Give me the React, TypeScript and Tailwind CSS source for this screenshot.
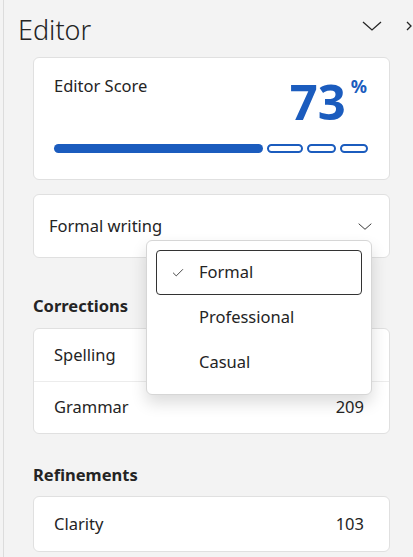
import { Check } from "lucide-react";

const corrections = [
  { label: "Spelling", count: "" },
  { label: "Grammar", count: "209" },
];

const styles = ["Formal", "Professional", "Casual"];

function Chevron({ className }: { className?: string }) {
  return (
    <svg viewBox="0 0 20 10" fill="none" className={className}>
      <polyline points="1,1 10,9 19,1" stroke="#242424" strokeWidth="1.3" />
    </svg>
  );
}

export default function App() {
  return (
    <div className="relative h-[557px] w-[413px] overflow-hidden bg-[#f3f3f3] font-['Noto_Sans',sans-serif] text-[#242424]">
      {/* left rail line */}
      <div className="absolute left-[3px] top-0 h-full w-px bg-[#dcdcdc]" />

      {/* header */}
      <div className="flex h-[57px] items-start pl-[18px] pt-[12px]">
        <h1 className="text-[27px] font-light leading-[36px]">Editor</h1>
        <div className="-mr-[3px] ml-auto flex items-start pt-[9px]">
          <Chevron className="h-[10px] w-[20px]" />
          <svg viewBox="0 0 10 10" fill="none" className="ml-[24px] h-[10px] w-[10px]">
            <polyline points="1,1 5,5 1,9" stroke="#242424" strokeWidth="1.3" />
          </svg>
        </div>
      </div>

      <div className="ml-[33px] w-[357px]">
        {/* score card */}
        <div className="h-[123px] rounded-[6px] border border-[#e0e0e0] bg-white px-[20px] pt-[15px]">
          <div className="flex items-start justify-between">
            <span className="mt-[2px] text-[16.5px] leading-[22px]">Editor Score</span>
            <div className="mr-[2px] flex items-start">
              <span className="text-[49px] font-bold leading-[56px] text-[#1b5cbe]">73</span>
              <span className="ml-[5px] mt-[3px] text-[18px] font-bold leading-[20px] text-[#1b5cbe]">%</span>
            </div>
          </div>
          <div className="mt-[15px] flex h-[9px] gap-[4px]">
            <div className="w-[209px] rounded-full bg-[#1b5cbe]" />
            <div className="w-[36px] rounded-full border-2 border-[#1b5cbe]" />
            <div className="w-[29px] rounded-full border-2 border-[#1b5cbe]" />
            <div className="w-[28px] rounded-full border-2 border-[#1b5cbe]" />
          </div>
        </div>

        {/* writing style select */}
        <div className="mt-[14px] flex h-[64px] items-center justify-between rounded-[6px] border border-[#e0e0e0] bg-white pl-[15px] pr-[17px]">
          <span className="text-[16.5px]">Formal writing</span>
          <Chevron className="h-[7px] w-[14px]" />
        </div>

        {/* corrections */}
        <h2 className="mt-[36px] text-[16.5px] font-bold leading-[24px]">Corrections</h2>
        <div className="mt-[10px] overflow-hidden rounded-[6px] border border-[#e0e0e0] bg-white">
          {corrections.map((c, i) => (
            <div
              key={c.label}
              className={`flex h-[52px] items-center justify-between px-[20px] text-[16.5px] ${i > 0 ? "border-t border-[#ececec]" : ""}`}
            >
              <span>{c.label}</span>
              <span className="mr-[5px]">{c.count}</span>
            </div>
          ))}
        </div>

        {/* refinements */}
        <h2 className="mt-[29px] text-[16.5px] font-bold leading-[24px]">Refinements</h2>
        <div className="mt-[9px] rounded-[6px] border border-[#e0e0e0] bg-white">
          <div className="flex h-[54px] items-center justify-between px-[20px] text-[16.5px]">
            <span>Clarity</span>
            <span className="mr-[5px]">103</span>
          </div>
        </div>
      </div>

      {/* dropdown menu */}
      <div className="absolute left-[146px] top-[240px] w-[226px] rounded-[6px] border border-[#d6d6d6] bg-white p-[9px] shadow-[0_8px_16px_rgba(0,0,0,0.14)]">
        {styles.map((s, i) => (
          <div
            key={s}
            className={`flex h-[45px] items-center rounded-[4px] text-[16.5px] ${i === 0 ? "border border-[#333]" : "border border-transparent"}`}
          >
            <span className="flex w-[42px] justify-center">
              {i === 0 && <Check className="h-[14px] w-[14px]" strokeWidth={1.4} />}
            </span>
            <span>{s}</span>
          </div>
        ))}
      </div>
    </div>
  );
}
